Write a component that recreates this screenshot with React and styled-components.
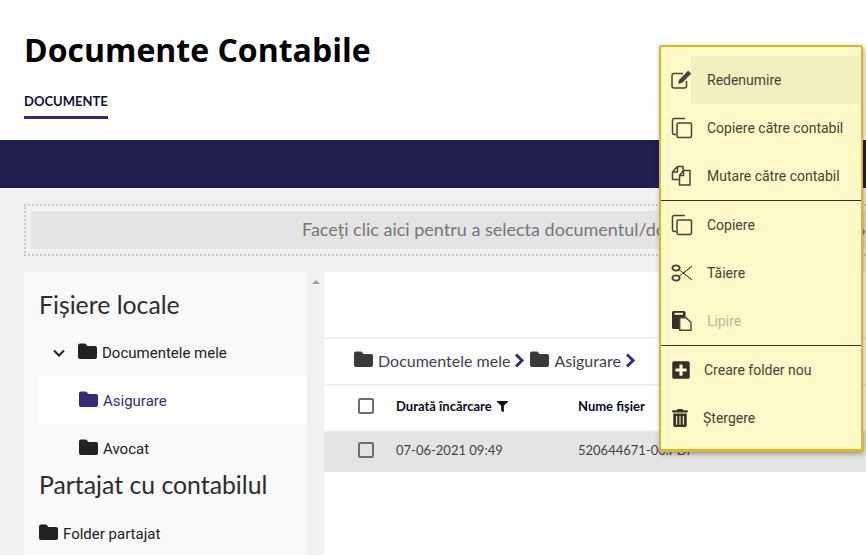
import React from 'react';
import styled, { createGlobalStyle } from 'styled-components';
import { FaFilter, FaPlusSquare, FaTrashAlt } from 'react-icons/fa';

const Global = createGlobalStyle`
  html, body { margin: 0; padding: 0; background: #fff; }
  body { width: 866px; height: 555px; overflow: hidden; font-family: "Lato", sans-serif; }
  * { box-sizing: border-box; }
`;
const Page = styled.div`position: relative; width: 866px; height: 555px; overflow: hidden; display: flex; flex-direction: column; background: #f1f1f1;`;
const Header = styled.header`height: 140px; background: #fff; padding: 29px 0 0 24px; display: flex; flex-direction: column; align-items: flex-start;`;
const Title = styled.h1`margin: 0; font: 700 32px/42px "Open Sans", sans-serif; color: #000;`;
const Tab = styled.div`margin-top: 14px; height: 34px; padding-top: 8px; font: 700 13px/16px "Lato", sans-serif; color: #110e3a; border-bottom: 3px solid #36297c;`;
const Band = styled.div`height: 48px; background: #201d4f;`;
const Content = styled.div`flex: 1; padding: 16px 0 0 24px; display: flex; flex-direction: column; gap: 16px; min-height: 0;`;
const Drop = styled.div`height: 52px; padding: 5px 0 5px 5px; border: 2px dotted #c8c8c8; border-right: 0;`;
const DropInner = styled.div`height: 38px; background: #e4e4e4; padding-left: 271px; font-size: 18px; line-height: 36px; color: #777; white-space: nowrap; overflow: hidden; display: flex; justify-content: space-between;`;
const DropEdge = styled.span`font-size: 20px; line-height: 36px; color: #666;`;
const Columns = styled.div`flex: 1; display: flex; min-height: 0;`;
const Side = styled.aside`width: 283px; background: #f9f9f9; padding: 16px 0 0 15px; overflow: hidden;`;
const SideTitle = styled.h2`margin: ${p => p.$m || '0 0 6px'}; font: 400 24.8px/34px "Lato", sans-serif; color: #2d2d2d;`;
const TreeRow = styled.div`height: 48px; display: flex; align-items: center; padding-left: ${p => p.$indent}px; padding-top: 1px; gap: 5px; font: 400 15px/20px "Roboto", sans-serif; color: ${p => (p.$active ? '#352a7e' : '#222')}; background: ${p => (p.$active ? '#fff' : 'transparent')};`;
const Caret = styled.svg`width: 14px; height: 14px; margin: 0 7px 0 -1px; fill: none; stroke: #222; stroke-width: 2;`;
const FolderSvg = styled.svg`width: 19px; height: 16px; flex: none; margin-top: -3px; fill: ${p => p.$c};`;
const Chevron = styled.svg`width: 11px; height: 15px; flex: none; fill: none; stroke: #352a7e; stroke-width: 3; margin-right: 1px;`;
const Scroll = styled.div`width: 17px; background: #f1f1f1; display: flex; justify-content: center; padding-top: 8px;`;
const ScrollUp = styled.div`width: 0; height: 0; border: 4px solid transparent; border-top: 0; border-bottom: 4px solid #a3a3a3;`;
const Main = styled.main`flex: 1; background: #fff; display: flex; flex-direction: column;`;
const Toolbar = styled.div`height: 67px; border-bottom: 2px solid #f1f1f1;`;
const Crumbs = styled.div`height: 47px; border-bottom: 2px solid #f1f1f1; padding: 0 0 2px 30px; display: flex; align-items: center; gap: 4px; font-size: 16px; color: #3f3f4f;`;
const Crumb = styled.span`display: flex; align-items: center; gap: 5px;`;
const Grid = styled.div`height: ${p => p.$h}px; padding-bottom: 4px; display: grid; grid-template-columns: 72px 182px 1fr; align-items: center; font-size: 13px; color: ${p => (p.$head ? '#0a0a1e' : '#444')}; font-weight: ${p => (p.$head ? 700 : 400)}; background: ${p => (p.$sel ? '#e4e4e4' : '#fff')}; border-bottom: ${p => (p.$head ? '2px solid #f1f1f1' : '0')};`;
const Check = styled.span`justify-self: center; width: 16px; height: 16px; border: 2px solid #6d6d6d; border-radius: 2px; margin-left: 12px;`;
const HeadCell = styled.span`display: flex; align-items: center; gap: 5px;`;
const Menu = styled.nav`position: absolute; left: 659px; top: 45px; width: 204px; height: 407px; background: #fef9c7; border: 2px solid #dfb71e; border-bottom-width: 3px; border-radius: 2px; box-shadow: 1px 2px 5px rgba(0,0,0,.35); padding-top: 9px; font: 400 14px/20px "Roboto", sans-serif; color: #444439;`;
const Item = styled.div`height: 48px; display: flex; align-items: center; position: relative; padding-left: ${p => p.$pad || 46}px; color: ${p => (p.$off ? '#b9b79b' : '#444439')};`;
const Hilite = styled.span`position: absolute; left: 30px; right: 0; top: 0; bottom: 0; background: #f3f0c0;`;
const Label = styled.span`position: relative;`;
const IconSlot = styled.span`position: absolute; left: 10px; top: 50%; transform: translateY(-50%); width: 22px; height: 22px; display: flex; align-items: center; justify-content: flex-start; color: #33322a;`;
const Rule = styled.hr`margin: 0; border: 0; border-top: 1px solid #33322a; height: 1px;`;

const Ico = ({ children }) => <svg width="22" height="22" viewBox="0 0 22 22" fill="none" stroke="#44443a" strokeWidth="1.5" strokeLinejoin="round">{children}</svg>;
const EditI = () => <Ico><path d="M15.5 12V17a2 2 0 0 1-2 2H3a2 2 0 0 1-2-2V6.5a2 2 0 0 1 2-2h9"/><path d="M7.5 14.5l.8-3.4L17 2l3 2.6-8.8 9z" fill="#44443a" strokeWidth=".6"/></Ico>;
const CopyI = () => <Ico><path d="M5 17.5 H3 a1.5 1.5 0 0 1-1.5-1.5 V3 a1.5 1.5 0 0 1 1.5-1.5 H14"/><rect x="6" y="6" width="14.5" height="14.5" rx="1.5"/></Ico>;
const MoveI = () => <Ico><path d="M8 14.5 H1.5 V7 L6.5 1.5 H12 V5"/><path d="M6.5 1.5 V7 H1.5"/><path d="M8.5 20 V10.5 L12.5 5.5 H19 V20 Z"/><path d="M12.5 5.5 V10.5 H8.5"/></Ico>;
const CutI = () => <svg width="22" height="22" viewBox="0 0 22 22" fill="none" stroke="#44443a" strokeWidth="1"><ellipse cx="5" cy="6" rx="3.6" ry="2.6" strokeWidth="1.8"/><ellipse cx="5" cy="16" rx="3.6" ry="2.6" strokeWidth="1.8"/><path d="M8 7.5 L21 18 L12 10.5 M8 14.5 L21 4 L12 11.5"/></svg>;
const PasteI = () => <svg width="22" height="22" viewBox="0 0 22 22"><path d="M1 2.5 A1.5 1.5 0 0 1 2.5 1 H13 A1.5 1.5 0 0 1 14.5 2.5 V7 H8 V19 H2.5 A1.5 1.5 0 0 1 1 17.5 Z" fill="#33322a"/><rect x="3.5" y="2.8" width="8.5" height="2" fill="#fef9c7"/><path d="M8.7 7.7 H15 L20 12.5 V20.3 H8.7 Z" fill="#fef9c7" stroke="#4a4a3e" strokeWidth="1.4"/></svg>;

const Folder = ({ c = '#222' }) => (
  <FolderSvg $c={c} viewBox="0 0 19 16">
    <path d="M2 0.5 H6.5 Q7.5 0.5 8.2 1.4 L9.4 3 H17 A2 2 0 0 1 19 5 V14 A2 2 0 0 1 17 16 H2 A2 2 0 0 1 0 14 V2.5 A2 2 0 0 1 2 0.5 Z" />
  </FolderSvg>
);
const Next = () => <Chevron viewBox="0 0 11 15"><path d="M2 1.5 L8 7.5 L2 13.5" /></Chevron>;

export default function App() {
  return (
    <Page>
      <Global />
      <Header>
        <Title>Documente Contabile</Title>
        <Tab>DOCUMENTE</Tab>
      </Header>
      <Band />
      <Content>
        <Drop>
          <DropInner>Faceți clic aici pentru a selecta documentul/documentele<DropEdge>›</DropEdge></DropInner>
        </Drop>
        <Columns>
          <Side>
            <SideTitle>Fișiere locale</SideTitle>
            <TreeRow $indent={14}>
              <Caret viewBox="0 0 14 14"><path d="M2 4.5 L7 9.5 L12 4.5" /></Caret>
              <Folder /> Documentele mele
            </TreeRow>
            <TreeRow $indent={40} $active><Folder c="#352a7e" /> Asigurare</TreeRow>
            <TreeRow $indent={40}><Folder /> Avocat</TreeRow>
            <SideTitle $m="-4px 0 7px">Partajat cu contabilul</SideTitle>
            <TreeRow $indent={0}><Folder /> Folder partajat</TreeRow>
          </Side>
          <Scroll><ScrollUp /></Scroll>
          <Main>
            <Toolbar />
            <Crumbs>
              <Crumb><Folder c="#3a3a3a" /> Documentele mele</Crumb>
              <Next />
              <Crumb><Folder c="#3a3a3a" /> Asigurare</Crumb>
              <Next />
            </Crumbs>
            <Grid $h={46} $head>
              <Check />
              <HeadCell>Durată încărcare <FaFilter size={11} color="#111" /></HeadCell>
              <span>Nume fișier</span>
            </Grid>
            <Grid $h={40} $sel>
              <Check />
              <span>07-06-2021 09:49</span>
              <span>520644671-00.PDF</span>
            </Grid>
          </Main>
        </Columns>
      </Content>
      <Menu>
        <Item><Hilite /><IconSlot><EditI /></IconSlot><Label>Redenumire</Label></Item>
        <Item><IconSlot><CopyI /></IconSlot><Label>Copiere către contabil</Label></Item>
        <Item><IconSlot><MoveI /></IconSlot><Label>Mutare către contabil</Label></Item>
        <Rule />
        <Item><IconSlot><CopyI /></IconSlot><Label>Copiere</Label></Item>
        <Item><IconSlot><CutI /></IconSlot><Label>Tăiere</Label></Item>
        <Item $off><IconSlot><PasteI /></IconSlot><Label>Lipire</Label></Item>
        <Rule />
        <Item $pad={43}><IconSlot><FaPlusSquare size={20} /></IconSlot><Label>Creare folder nou</Label></Item>
        <Item $pad={42}><IconSlot><FaTrashAlt size={18} /></IconSlot><Label>Ștergere</Label></Item>
      </Menu>
    </Page>
  );
}
